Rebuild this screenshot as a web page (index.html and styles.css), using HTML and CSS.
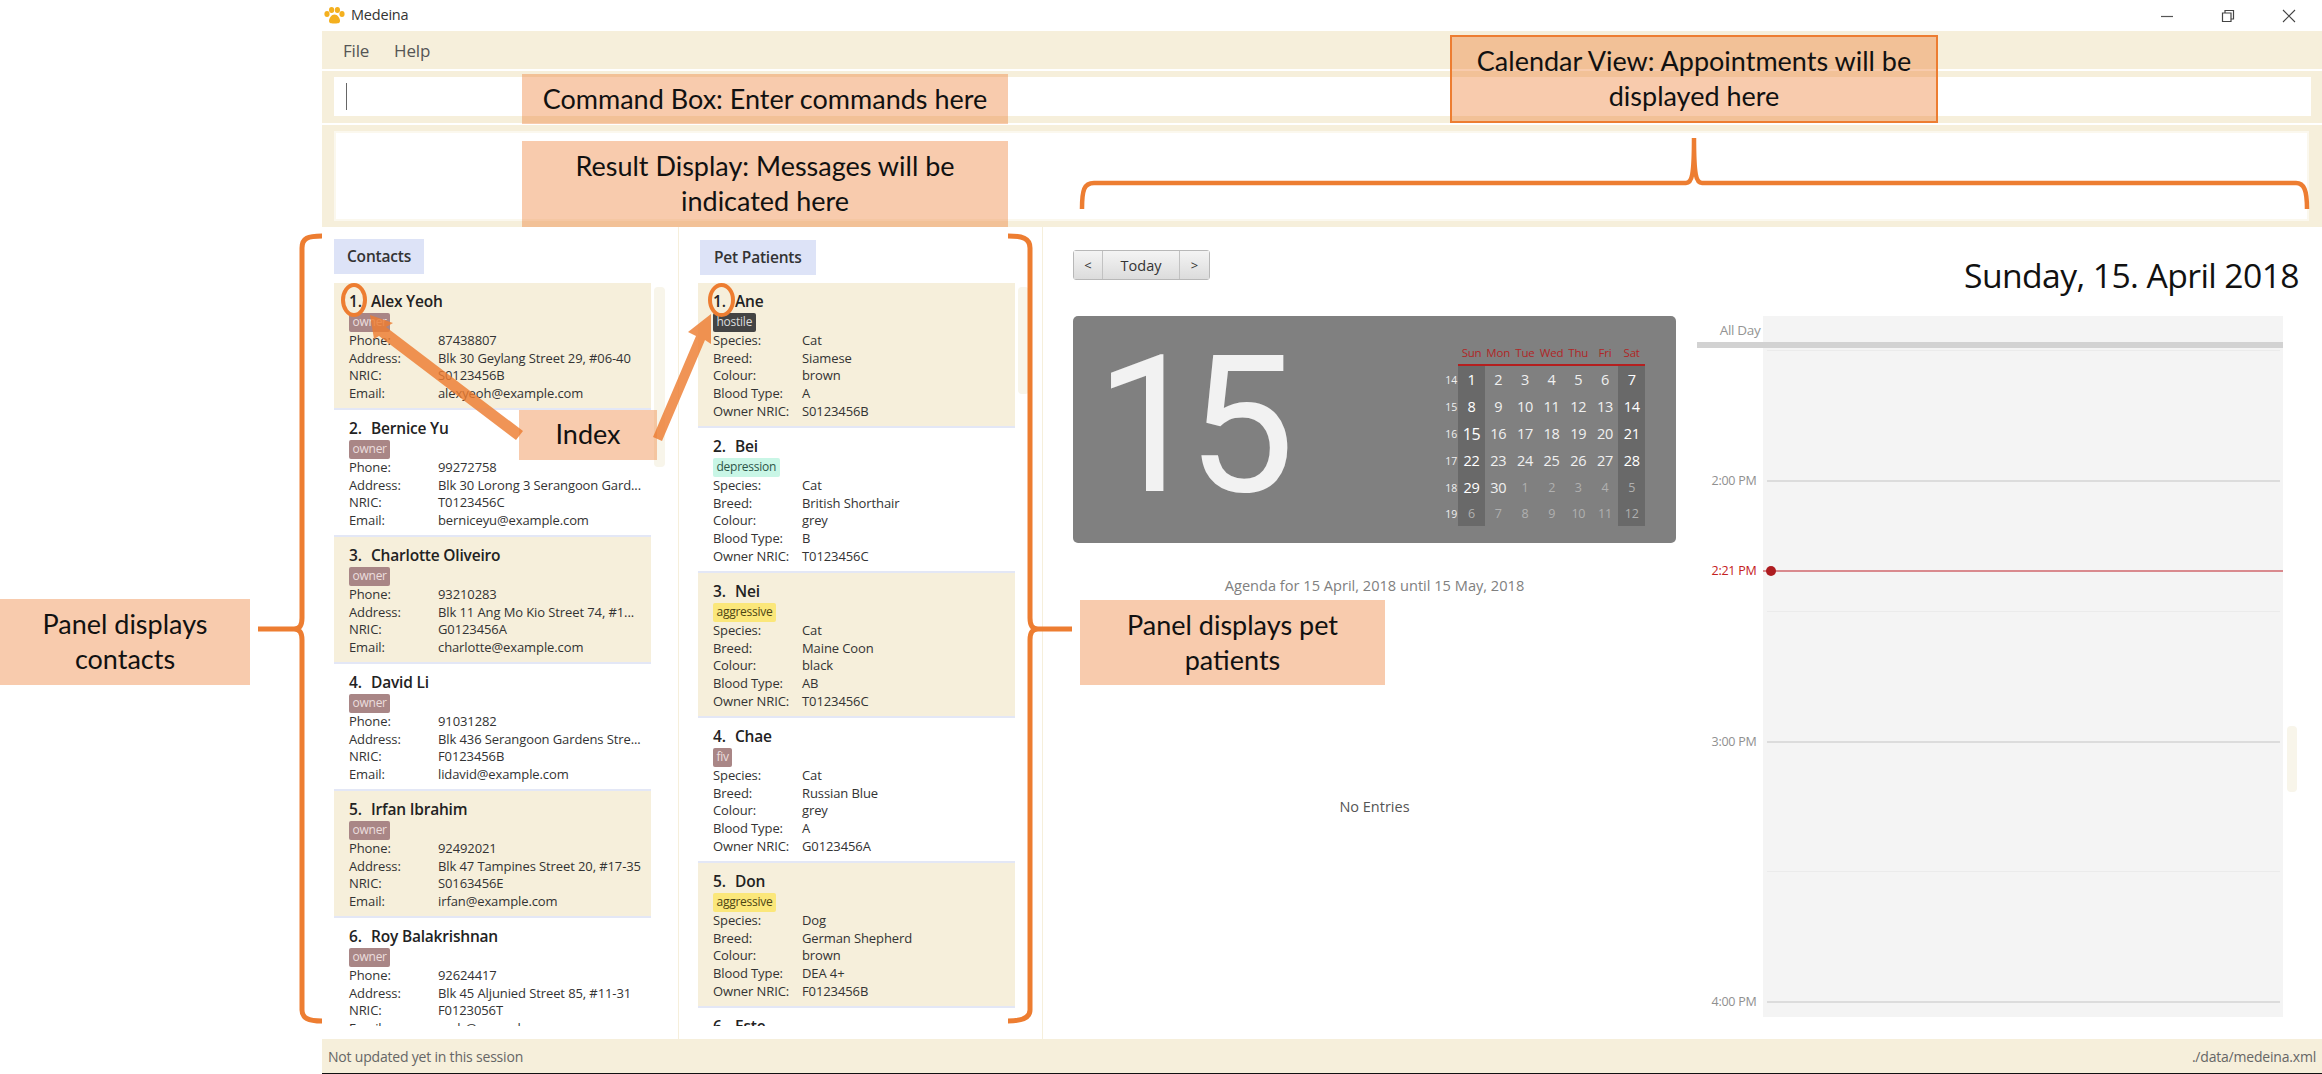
FILE: index.html
```html
<!DOCTYPE html>
<html lang="en">
<head>
    <meta charset="UTF-8">
    <title>Medeina</title>
    <link rel="stylesheet" href="styles.css">
</head>
<body>

<div id="page">
    <div id="app">
        <div class="titlebar">
            <svg class="paw" viewBox="0 0 21 17" width="21" height="17">
                <ellipse cx="3" cy="7" rx="2.6" ry="3" fill="#f4b01f"/>
                <ellipse cx="7.6" cy="3" rx="2.6" ry="3" fill="#f4b01f"/>
                <ellipse cx="13.4" cy="3" rx="2.6" ry="3" fill="#f4b01f"/>
                <ellipse cx="18" cy="7" rx="2.6" ry="3" fill="#f4b01f"/>
                <path d="M10.5 7.5c3 0 5.5 3.5 5.5 6.500 0 2.500-3 2.500-5.500 2.500S5 16.500 5 14c0-3 2.500-6.500 5.500-6.500z" fill="#f4b01f"/>
            </svg>
            <span class="app-name">Medeina</span>
            <div class="win-controls">
                <svg viewBox="0 0 14 14" width="14" height="14"><path d="M1 7.500h12" stroke="#555" stroke-width="1.200"/></svg>
                <svg viewBox="0 0 14 14" width="14" height="14"><path d="M1.500 4h8.500v8.500H1.500zM4 4V1.500h8.500V10H10" fill="none" stroke="#444" stroke-width="1.200"/></svg>
                <svg viewBox="0 0 14 14" width="14" height="14"><path d="M1 1l12 12M13 1L1 13" stroke="#444" stroke-width="1.100"/></svg>
            </div>
        </div>

        <div class="menubar">
            <span>File</span>
            <span>Help</span>
        </div>

        <div class="command-section">
            <div class="command-input"><span class="caret"></span></div>
        </div>

        <div class="result-section">
            <div class="result-box"></div>
        </div>

        <div class="main">
            <div class="list-col contacts-col">
                <div class="chip">Contacts</div>
                <div class="list-row">
                    <div class="list">
                        <div class="card alt">
                            <div class="card-title"><span class="num">1.</span>Alex Yeoh</div>
                            <span class="tag tag-owner">owner</span>
                            <div class="field"><span>Phone:</span><span>87438807</span></div>
                            <div class="field"><span>Address:</span><span>Blk 30 Geylang Street 29, #06-40</span></div>
                            <div class="field"><span>NRIC:</span><span>S0123456B</span></div>
                            <div class="field"><span>Email:</span><span>alexyeoh@example.com</span></div>
                        </div>
                        <div class="card">
                            <div class="card-title"><span class="num">2.</span>Bernice Yu</div>
                            <span class="tag tag-owner">owner</span>
                            <div class="field"><span>Phone:</span><span>99272758</span></div>
                            <div class="field"><span>Address:</span><span>Blk 30 Lorong 3 Serangoon Gard...</span></div>
                            <div class="field"><span>NRIC:</span><span>T0123456C</span></div>
                            <div class="field"><span>Email:</span><span>berniceyu@example.com</span></div>
                        </div>
                        <div class="card alt">
                            <div class="card-title"><span class="num">3.</span>Charlotte Oliveiro</div>
                            <span class="tag tag-owner">owner</span>
                            <div class="field"><span>Phone:</span><span>93210283</span></div>
                            <div class="field"><span>Address:</span><span>Blk 11 Ang Mo Kio Street 74, #1...</span></div>
                            <div class="field"><span>NRIC:</span><span>G0123456A</span></div>
                            <div class="field"><span>Email:</span><span>charlotte@example.com</span></div>
                        </div>
                        <div class="card">
                            <div class="card-title"><span class="num">4.</span>David Li</div>
                            <span class="tag tag-owner">owner</span>
                            <div class="field"><span>Phone:</span><span>91031282</span></div>
                            <div class="field"><span>Address:</span><span>Blk 436 Serangoon Gardens Stre...</span></div>
                            <div class="field"><span>NRIC:</span><span>F0123456B</span></div>
                            <div class="field"><span>Email:</span><span>lidavid@example.com</span></div>
                        </div>
                        <div class="card alt">
                            <div class="card-title"><span class="num">5.</span>Irfan Ibrahim</div>
                            <span class="tag tag-owner">owner</span>
                            <div class="field"><span>Phone:</span><span>92492021</span></div>
                            <div class="field"><span>Address:</span><span>Blk 47 Tampines Street 20, #17-35</span></div>
                            <div class="field"><span>NRIC:</span><span>S0163456E</span></div>
                            <div class="field"><span>Email:</span><span>irfan@example.com</span></div>
                        </div>
                        <div class="card">
                            <div class="card-title"><span class="num">6.</span>Roy Balakrishnan</div>
                            <span class="tag tag-owner">owner</span>
                            <div class="field"><span>Phone:</span><span>92624417</span></div>
                            <div class="field"><span>Address:</span><span>Blk 45 Aljunied Street 85, #11-31</span></div>
                            <div class="field"><span>NRIC:</span><span>F0123056T</span></div>
                            <div class="field"><span>Email:</span><span>royb@example.com</span></div>
                        </div>
                    </div>
                    <div class="scroll-thumb"></div>
                </div>
            </div>

            <div class="list-col pets-col">
                <div class="chip">Pet Patients</div>
                <div class="list-row">
                    <div class="list">
                        <div class="card alt">
                            <div class="card-title"><span class="num">1.</span>Ane</div>
                            <span class="tag tag-hostile">hostile</span>
                            <div class="field"><span>Species:</span><span>Cat</span></div>
                            <div class="field"><span>Breed:</span><span>Siamese</span></div>
                            <div class="field"><span>Colour:</span><span>brown</span></div>
                            <div class="field"><span>Blood Type:</span><span>A</span></div>
                            <div class="field"><span>Owner NRIC:</span><span>S0123456B</span></div>
                        </div>
                        <div class="card">
                            <div class="card-title"><span class="num">2.</span>Bei</div>
                            <span class="tag tag-depression">depression</span>
                            <div class="field"><span>Species:</span><span>Cat</span></div>
                            <div class="field"><span>Breed:</span><span>British Shorthair</span></div>
                            <div class="field"><span>Colour:</span><span>grey</span></div>
                            <div class="field"><span>Blood Type:</span><span>B</span></div>
                            <div class="field"><span>Owner NRIC:</span><span>T0123456C</span></div>
                        </div>
                        <div class="card alt">
                            <div class="card-title"><span class="num">3.</span>Nei</div>
                            <span class="tag tag-aggressive">aggressive</span>
                            <div class="field"><span>Species:</span><span>Cat</span></div>
                            <div class="field"><span>Breed:</span><span>Maine Coon</span></div>
                            <div class="field"><span>Colour:</span><span>black</span></div>
                            <div class="field"><span>Blood Type:</span><span>AB</span></div>
                            <div class="field"><span>Owner NRIC:</span><span>T0123456C</span></div>
                        </div>
                        <div class="card">
                            <div class="card-title"><span class="num">4.</span>Chae</div>
                            <span class="tag tag-owner">fiv</span>
                            <div class="field"><span>Species:</span><span>Cat</span></div>
                            <div class="field"><span>Breed:</span><span>Russian Blue</span></div>
                            <div class="field"><span>Colour:</span><span>grey</span></div>
                            <div class="field"><span>Blood Type:</span><span>A</span></div>
                            <div class="field"><span>Owner NRIC:</span><span>G0123456A</span></div>
                        </div>
                        <div class="card alt">
                            <div class="card-title"><span class="num">5.</span>Don</div>
                            <span class="tag tag-aggressive">aggressive</span>
                            <div class="field"><span>Species:</span><span>Dog</span></div>
                            <div class="field"><span>Breed:</span><span>German Shepherd</span></div>
                            <div class="field"><span>Colour:</span><span>brown</span></div>
                            <div class="field"><span>Blood Type:</span><span>DEA 4+</span></div>
                            <div class="field"><span>Owner NRIC:</span><span>F0123456B</span></div>
                        </div>
                        <div class="card">
                            <div class="card-title"><span class="num">6.</span>Este</div>
                        </div>
                    </div>
                    <div class="scroll-thumb"></div>
                </div>
            </div>

            <div class="calendar-col">
                <div class="calendar-head">
                    <div class="nav-buttons">
                        <button class="nav-btn">&lt;</button>
                        <button class="nav-btn nav-today">Today</button>
                        <button class="nav-btn">&gt;</button>
                    </div>
                    <div class="date-title">Sunday, 15. April 2018</div>
                </div>

                <div class="calendar-body">
                    <div class="agenda-pane">
                        <div class="day-card">
                            <div class="big-day">15</div>
                            <div class="mini-cal">
                                <span></span>
                                <span class="mc-head">Sun</span><span class="mc-head">Mon</span><span class="mc-head">Tue</span><span class="mc-head">Wed</span><span class="mc-head">Thu</span><span class="mc-head">Fri</span><span class="mc-head">Sat</span>

                                <span class="mc-week">14</span>
                                <span class="mc-day end">1</span><span class="mc-day">2</span><span class="mc-day">3</span><span class="mc-day">4</span><span class="mc-day">5</span><span class="mc-day">6</span><span class="mc-day end">7</span>

                                <span class="mc-week">15</span>
                                <span class="mc-day end">8</span><span class="mc-day">9</span><span class="mc-day">10</span><span class="mc-day">11</span><span class="mc-day">12</span><span class="mc-day">13</span><span class="mc-day end">14</span>

                                <span class="mc-week">16</span>
                                <span class="mc-day end today">15</span><span class="mc-day">16</span><span class="mc-day">17</span><span class="mc-day">18</span><span class="mc-day">19</span><span class="mc-day">20</span><span class="mc-day end">21</span>

                                <span class="mc-week">17</span>
                                <span class="mc-day end">22</span><span class="mc-day">23</span><span class="mc-day">24</span><span class="mc-day">25</span><span class="mc-day">26</span><span class="mc-day">27</span><span class="mc-day end">28</span>

                                <span class="mc-week">18</span>
                                <span class="mc-day end">29</span><span class="mc-day">30</span><span class="mc-day other">1</span><span class="mc-day other">2</span><span class="mc-day other">3</span><span class="mc-day other">4</span><span class="mc-day end other">5</span>

                                <span class="mc-week">19</span>
                                <span class="mc-day end other">6</span><span class="mc-day other">7</span><span class="mc-day other">8</span><span class="mc-day other">9</span><span class="mc-day other">10</span><span class="mc-day other">11</span><span class="mc-day end other">12</span>
                            </div>
                        </div>
                        <div class="agenda-title">Agenda for 15 April, 2018 until 15 May, 2018</div>
                        <div class="no-entries">No Entries</div>
                    </div>

                    <div class="day-view">
                        <div class="all-day">
                            <div class="all-day-label">All Day</div>
                            <div class="all-day-cell"></div>
                        </div>
                        <div class="all-day-rule"></div>
                        <div class="day-body">
                            <div class="slot"><div class="slot-time"></div><div class="slot-cell"><div class="slot-line"></div></div></div>
                            <div class="slot"><div class="slot-time"><span>2:00 PM</span></div><div class="slot-cell"><div class="slot-line strong"></div></div></div>
                            <div class="slot"><div class="slot-time"></div><div class="slot-cell"><div class="slot-line"></div></div></div>
                            <div class="slot"><div class="slot-time"><span>3:00 PM</span></div><div class="slot-cell"><div class="slot-line strong"></div></div></div>
                            <div class="slot"><div class="slot-time"></div><div class="slot-cell"><div class="slot-line"></div></div></div>
                            <div class="slot"><div class="slot-time"><span>4:00 PM</span></div><div class="slot-cell"><div class="slot-line strong"></div></div></div>
                            <div class="now-label">2:21 PM</div>
                            <div class="now-line"></div>
                            <div class="now-dot"></div>
                        </div>
                    </div>
                    <div class="scroll-thumb day-thumb"></div>
                </div>
            </div>
        </div>

        <div class="statusbar">
            <span>Not updated yet in this session</span>
            <span>./data/medeina.xml</span>
        </div>
    </div>

    <!-- callouts pasted over the screenshot -->
    <svg class="marks" viewBox="0 0 2322 1074" width="2322" height="1074">
        <g fill="none" stroke="#ed7d31" stroke-width="5">
            <path d="M322 236C308 236 302 238 302 248V618C302 625 300 629 294 629H258M294 629C300 629 302 633 302 640V1010C302 1018 308 1021 322 1021"/>
            <path d="M1008 236C1022 236 1030 238 1030 248V618C1030 625 1032 629 1038 629H1072M1038 629C1032 629 1030 633 1030 640V1010C1030 1018 1022 1021 1008 1021"/>
            <path d="M1082 209C1082 190 1084 183 1094 183H1686C1692 183 1694 175 1694 138C1694 175 1696 183 1702 183H2296C2304 183 2307 190 2307 209" stroke-width="4.500"/>
            <ellipse cx="354" cy="300" rx="11" ry="15" stroke-width="4"/>
            <ellipse cx="721.500" cy="300" rx="11.500" ry="15" stroke-width="4"/>
        </g>
        <g fill="#ed7d31" fill-opacity="0.82">
            <path d="M370 315L393 323L386 327L523 431L516 440L379 336L374 339Z"/>
            <path d="M711 314L711 344L705 340L662 441L653 437L696 336L688 332Z"/>
        </g>
    </svg>

    <div class="note note-command">Command Box: Enter commands here</div>
    <div class="note note-result">Result Display: Messages will be indicated here</div>
    <div class="note note-calendar">Calendar View: Appointments will be displayed here</div>
    <div class="note note-index">Index</div>
    <div class="note note-contacts">Panel displays contacts</div>
    <div class="note note-pets">Panel displays pet patients</div>
</div>

</body>
</html>
```

FILE: styles.css
```css
* {
    box-sizing: border-box;
}
body {
    margin: 0;
    background: white;
    font-family: 'Open Sans', 'Noto Sans', sans-serif;
    color: #333;
}
#page {
    position: relative;
    width: 2322px;
    height: 1074px;
    overflow: hidden;
}
#app {
    margin-left: 322px;
    height: 1074px;
    display: flex;
    flex-direction: column;
}

/* window chrome */
.titlebar {
    height: 31px;
    flex: none;
    display: flex;
    align-items: center;
    padding-left: 2px;
}
.paw {
    margin-right: 6px;
}
.app-name {
    font-size: 14.500px;
    line-height: 28px;
    margin-bottom: 2px;
    letter-spacing: -0.2px;
    color: #333;
}
.win-controls {
    margin-left: auto;
    display: flex;
    gap: 47px;
    padding-right: 26px;
}
.menubar {
    height: 38px;
    flex: none;
    background: #f6efdb;
    display: flex;
    align-items: center;
    gap: 25px;
    padding-left: 21px;
    font-size: 17px;
    letter-spacing: -0.2px;
    color: #555;
}
.command-section {
    height: 52px;
    flex: none;
    margin-top: 2px;
    padding: 6px 11px 7px 12px;
    background: #f6efdb;
}
.command-input {
    height: 39px;
    background: white;
    padding: 6px 0 0 12px;
}
.caret {
    display: block;
    width: 1px;
    height: 27px;
    background: #666;
}
.result-section {
    height: 102px;
    flex: none;
    margin-top: 2px;
    padding: 6px 13px 6px 12px;
    background: #f6efdb;
}
.result-box {
    height: 90px;
    background: white;
    border: 2px solid #fbf8ee;
}

.main {
    flex: 1;
    display: flex;
    min-height: 0;
}

/* contact and pet lists */
.list-col {
    flex: none;
    border-right: 1px solid #f6efdb;
    padding-top: 12px;
}
.contacts-col {
    width: 357px;
    padding-left: 12px;
}
.pets-col {
    width: 364px;
    padding-left: 19px;
}
.chip {
    display: inline-block;
    height: 35px;
    line-height: 35px;
    padding: 0 13px;
    background: #dde3f7;
    font-size: 15.500px;
    font-weight: 600;
    letter-spacing: -0.2px;
    color: #333;
}
.pets-col .chip {
    margin: 1px 0 0 2px;
    padding: 0 14px;
}
.list-row {
    display: flex;
    gap: 3px;
    margin-top: 9px;
    height: 743px;
    overflow: hidden;
}
.pets-col .list-row {
    margin-top: 8px;
}
.list {
    width: 317px;
    flex: none;
    overflow: hidden;
}
.scroll-thumb {
    width: 11px;
    flex: none;
    margin-top: 4px;
    height: 180px;
    background: #f8f5ea;
    border-radius: 4px;
}
.pets-col .scroll-thumb {
    height: 107px;
}
.card {
    height: 127px;
    padding: 6px 0 0 15px;
    border-bottom: 2px solid #e3e7f6;
    overflow: hidden;
}
.pets-col .card {
    height: 145px;
}
.pets-col .card:last-child {
    border-bottom: none;
}
.alt {
    background: #f6efdb;
}
.card-title {
    height: 24px;
    line-height: 24px;
    font-size: 15.500px;
    font-weight: 600;
    letter-spacing: -0.2px;
    color: #222;
}
.num {
    display: inline-block;
    min-width: 21px;
    margin-right: 1px;
}
.tag {
    display: block;
    width: fit-content;
    height: 19px;
    line-height: 18px;
    padding: 0 3.500px;
    border-radius: 2px;
    font-size: 12px;
    letter-spacing: -0.25px;
}
.tag-owner {
    background: #a98686;
    color: #ecdede;
}
.tag-hostile {
    background: #444;
    color: #ddd;
}
.tag-depression {
    background: #c9f6e6;
    color: #2c5548;
}
.tag-aggressive {
    background: #fbe77a;
    color: #4d4514;
}
.field {
    display: flex;
    height: 17.700px;
    line-height: 17.700px;
    font-size: 13px;
    letter-spacing: -0.1px;
    white-space: nowrap;
}
.field span:first-child {
    width: 89px;
    flex: none;
}

/* calendar */
.calendar-col {
    flex: 1;
    padding: 23px 0 0 30px;
    min-width: 0;
}
.calendar-head {
    height: 66px;
    display: flex;
    justify-content: space-between;
    align-items: flex-start;
    padding-right: 23px;
}
.nav-buttons {
    display: flex;
    height: 30px;
    border: 1px solid #b8b8b8;
    border-radius: 3px;
}
.nav-btn {
    width: 29px;
    padding: 0;
    border: 0;
    border-right: 1px solid #c2c2c2;
    background: linear-gradient(#f4f4f4, #dcdcdc);
    font-family: inherit;
    font-size: 13px;
    color: #333;
}
.nav-btn:last-child {
    border-right: 0;
}
.nav-today {
    width: 77px;
    font-size: 14.500px;
}
.date-title {
    margin-top: 3px;
    line-height: 44px;
    font-size: 33.700px;
    letter-spacing: -0.6px;
    color: #111;
}
.calendar-body {
    display: flex;
    align-items: flex-start;
}
.agenda-pane {
    width: 603px;
    flex: none;
    margin-right: 21px;
}
.day-card {
    height: 227px;
    display: flex;
    justify-content: space-between;
    background: #808080;
    border-radius: 5px;
}
.big-day {
    margin: 15px 0 0 22px;
    font-family: Roboto, 'Liberation Sans', sans-serif;
    font-size: 192px;
    line-height: 190px;
    letter-spacing: -16px;
    color: #f2f2f2;
}
.mini-cal {
    margin: 24px 31px 0 0;
    display: grid;
    grid-template-columns: 22px repeat(7, 26.700px);
    grid-template-rows: 26px repeat(5, 27px) 25px;
    align-self: flex-start;
    text-align: center;
}
.mini-cal span {
    display: flex;
    align-items: center;
    justify-content: center;
}
.mc-head {
    border-bottom: 2px solid #b51f1f;
    font-size: 11.500px;
    letter-spacing: -0.2px;
    color: #b02626;
}
.mc-week {
    padding-left: 8px;
    font-size: 10.500px;
    color: #efefef;
}
.mc-day {
    font-size: 14.500px;
    letter-spacing: -0.3px;
    color: #f0f0f0;
}
.mc-day.end {
    background: #696969;
    color: #fff;
}
.mc-day.today {
    font-size: 16px;
}
.mc-day.other {
    font-size: 12.500px;
    color: #b0b0b0;
}
.agenda-title {
    margin-top: 32px;
    line-height: 20px;
    text-align: center;
    font-size: 14.600px;
    color: #808080;
}
.no-entries {
    margin-top: 202px;
    line-height: 20px;
    text-align: center;
    font-size: 14.500px;
    color: #555;
}
.day-view {
    width: 586px;
    height: 701px;
    flex: none;
    display: flex;
    flex-direction: column;
}
.all-day {
    height: 26px;
    flex: none;
    display: flex;
}
.all-day-label {
    width: 65.500px;
    padding-right: 2px;
    line-height: 28px;
    text-align: right;
    font-size: 13.500px;
    letter-spacing: -0.3px;
    color: #949494;
}
.all-day-cell {
    flex: 1;
    background: #f4f4f4;
}
.all-day-rule {
    height: 6px;
    flex: none;
    background: #d2d2d2;
}
.day-body {
    position: relative;
    flex: 1;
    overflow: hidden;
}
.slot {
    height: 130.300px;
    display: flex;
}
.slot-time {
    width: 65.500px;
    flex: none;
    padding-right: 6px;
    text-align: right;
    font-size: 12.500px;
    letter-spacing: -0.25px;
    color: #909090;
}
.slot-time span {
    display: block;
    line-height: 16px;
    margin-top: -7px;
}
.slot-cell {
    flex: 1;
    padding: 0 3px 0 4px;
    background: #f4f4f4;
}
.slot:first-child .slot-cell {
    padding-top: 2px;
}
.slot:first-child {
    height: 132.300px;
}
.slot-line {
    height: 1px;
    background: #ebebeb;
}
.slot-line.strong {
    height: 2px;
    background: #dcdcdc;
}
.now-label {
    position: absolute;
    left: 0;
    top: 215px;
    width: 59.500px;
    line-height: 16px;
    text-align: right;
    font-size: 12.500px;
    letter-spacing: -0.25px;
    color: #c42020;
}
.now-line {
    position: absolute;
    left: 65.500px;
    right: 0;
    top: 222px;
    height: 2px;
    background: #d98a8e;
}
.now-dot {
    position: absolute;
    left: 69px;
    top: 218px;
    width: 10px;
    height: 10px;
    border-radius: 50%;
    background: #ae1c20;
}
.day-thumb {
    margin: 410px 0 0 4px;
    width: 10px;
    height: 66px;
}

.statusbar {
    height: 35px;
    flex: none;
    display: flex;
    justify-content: space-between;
    align-items: center;
    padding: 0 6px;
    background: #f6efdb;
    border-bottom: 1px solid #111;
    font-size: 14px;
    letter-spacing: -0.2px;
    color: #666;
}

/* callouts */
.marks {
    position: absolute;
    left: 0;
    top: 0;
}
.note {
    position: absolute;
    display: flex;
    align-items: center;
    justify-content: center;
    text-align: center;
    padding-bottom: 2px;
    background: rgba(237, 125, 49, 0.4);
    font-family: Lato, 'Open Sans', sans-serif;
    font-size: 27px;
    line-height: 35px;
    color: #111;
}
.note-command {
    left: 522px;
    top: 74px;
    width: 486px;
    height: 50px;
}
.note-result {
    left: 522px;
    top: 141px;
    width: 486px;
    height: 86px;
    padding: 0 40px 2px;
}
.note-calendar {
    left: 1450px;
    top: 35px;
    width: 488px;
    height: 88px;
    padding: 0 16px 2px;
    border: 2px solid #ed7d31;
}
.note-index {
    left: 519px;
    top: 410px;
    width: 138px;
    height: 50px;
    padding-bottom: 4px;
}
.note-contacts {
    left: 0;
    top: 599px;
    width: 250px;
    height: 86px;
    padding: 0 30px 2px;
}
.note-pets {
    left: 1080px;
    top: 600px;
    width: 305px;
    height: 85px;
    padding: 0 30px 2px;
}
```
